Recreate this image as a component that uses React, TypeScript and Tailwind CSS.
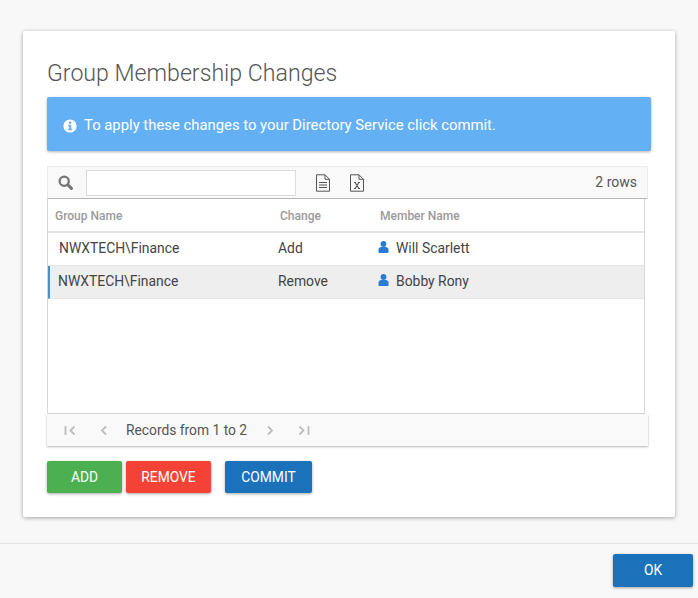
import React from "react";

function Info() {
  return (
    <svg width="14" height="14" viewBox="0 0 14 14" className="shrink-0">
      <circle cx="7" cy="7" r="6.6" fill="#fff" />
      <rect x="5.9" y="2.5" width="2.4" height="2.3" rx="0.4" fill="#64b0f5" />
      <path d="M5.2 5.8h3v4h1v1.4H5.2V9.8h1V7.2h-1z" fill="#64b0f5" />
    </svg>
  );
}

function Search() {
  return (
    <svg width="15" height="15" viewBox="0 0 15 15" fill="none" stroke="#757575">
      <circle cx="6.2" cy="6.2" r="4.6" strokeWidth="2.3" />
      <path d="M9.8 9.8l3.6 3.6" strokeWidth="3" strokeLinecap="round" />
    </svg>
  );
}

function Doc({ x }: { x?: boolean }) {
  return (
    <svg width="16" height="18" viewBox="0 0 16 18" fill="none" stroke="#555" strokeWidth="1">
      <path d="M1.5 .8h8.5l4.5 4.5v11.9h-13z" />
      <path d="M10 .8v4.5h4.5" />
      {x ? (
        <path d="M5 8.5h2M9 8.5h2M5 14.5h2M9 14.5h2M6.2 8.5l3.6 6M9.8 8.5l-3.6 6" strokeWidth="1.1" />
      ) : (
        <path d="M4 8.5h8M4 11h8M4 13.5h8" />
      )}
    </svg>
  );
}

function User() {
  return (
    <svg width="11" height="12" viewBox="0 0 11 12" fill="#2a7bd4" className="mb-[2px] shrink-0">
      <circle cx="5.5" cy="3" r="2.9" />
      <path d="M.5 11.4V8.6C.5 7 1.9 6 3.2 6h4.6c1.3 0 2.7 1 2.7 2.6v2.8c0 .3-.2.5-.5.5H1c-.3 0-.5-.2-.5-.5z" />
    </svg>
  );
}

function First({ flip }: { flip?: boolean }) {
  return (
    <svg width="12" height="11" viewBox="0 0 12 11" fill="none" stroke="#bdbdbd" strokeWidth="1.8" className={flip ? "-scale-x-100" : ""}>
      <path d="M1.5 1v9M10.5 1.5L6.5 5.5l4 4" />
    </svg>
  );
}

function Chevron({ flip }: { flip?: boolean }) {
  return (
    <svg width="8" height="11" viewBox="0 0 8 11" fill="none" stroke="#bdbdbd" strokeWidth="1.8" className={flip ? "-scale-x-100" : ""}>
      <path d="M6 1.5L2 5.5l4 4" />
    </svg>
  );
}

function Row({ group, change, member, selected }: { group: string; change: string; member: string; selected?: boolean }) {
  return (
    <div className={selected ? "flex h-[33px] items-center border-b border-[#e4e4e4] border-l-2 border-l-[#3f94cf] bg-[#eeeeee] pb-[1px] text-[13.9px] text-[#444]" : "flex h-[33px] items-center border-b border-[#e4e4e4] pb-[1px] text-[13.9px] text-[#444]"}>
      <div className={selected ? "w-[228px] pl-[8px]" : "w-[230px] pl-[11px]"}>{group}</div>
      <div className="w-[100px]">{change}</div>
      <div className="flex items-center gap-[7px]">
        <User />
        <span>{member}</span>
      </div>
    </div>
  );
}

const btn = "flex h-[32px] items-center justify-center rounded-[2px] text-[13.8px] font-normal text-white shadow-[0_1px_3px_rgba(0,0,0,0.35)]";

export default function App() {
  return (
    <div className="flex h-[598px] w-[698px] flex-col overflow-hidden bg-[#f8f8f8] font-['Roboto',sans-serif]">
      <div className="ml-[23px] mt-[31px] h-[486px] w-[652px] rounded-[2px] bg-white px-[24px] pt-[28px] shadow-[0_1px_4px_rgba(0,0,0,0.35)]">
        <h1 className="h-[38px] text-[23.15px] font-light leading-[30px] text-[#555]">Group Membership Changes</h1>
        <div className="flex h-[54px] w-[604px] items-center gap-[7px] rounded-[2px] bg-[#64b0f5] pl-[16px] pt-[3px] text-[14.85px] text-white shadow-[0_1px_3px_rgba(0,0,0,0.3)]">
          <Info />
          <span>To apply these changes to your Directory Service click commit.</span>
        </div>
        <div className="mt-[15px] flex h-[33px] w-[601px] items-center border border-[#ececec] border-b-[#b5b5b5] bg-[#f9f9f9] pl-[10px] pr-[10px]">
          <Search />
          <div className="ml-[13px] h-[26px] w-[210px] border border-[#dcdcdc] bg-white" />
          <div className="ml-[19px] flex items-center gap-[18px]">
            <Doc />
            <Doc x />
          </div>
          <span className="ml-auto text-[14px] text-[#555]">2 rows</span>
        </div>
        <div className="h-[215px] w-[598px] border-x border-b border-[#d9d9d9] bg-white">
          <div className="flex h-[34px] items-center border-b-[2px] border-[#e4e4e4] pt-[1px] text-[12px] font-medium text-[#9a9a9a]">
            <div className="w-[232px] pl-[7px]">Group Name</div>
            <div className="w-[100px]">Change</div>
            <div>Member Name</div>
          </div>
          <Row group="NWXTECH\Finance" change="Add" member="Will Scarlett" />
          <Row group="NWXTECH\Finance" change="Remove" member="Bobby Rony" selected />
        </div>
        <div className="flex h-[32px] w-[601px] items-center bg-[#f9f9f9] pl-[17px] text-[13.8px] text-[#555] shadow-[0_1px_2px_rgba(0,0,0,0.3)]">
          <First />
          <span className="ml-[24px] flex"><Chevron /></span>
          <span className="ml-[18px]">Records from 1 to 2</span>
          <span className="ml-[19px] flex"><Chevron flip /></span>
          <span className="ml-[24px] flex"><First flip /></span>
        </div>
        <div className="mt-[15px] flex">
          <button className={`${btn} w-[75px] bg-[#4caf50]`}>ADD</button>
          <button className={`${btn} ml-[4px] w-[85px] bg-[#f44336]`}>REMOVE</button>
          <button className={`${btn} ml-[14px] w-[87px] bg-[#1b72bb]`}>COMMIT</button>
        </div>
      </div>
      <div className="mt-[26px] flex flex-1 justify-end border-t border-[#e2e2e2] pr-[5px] pt-[10px]">
        <button className={`${btn} h-[33px] w-[80px] bg-[#1b72bb]`}>OK</button>
      </div>
    </div>
  );
}
